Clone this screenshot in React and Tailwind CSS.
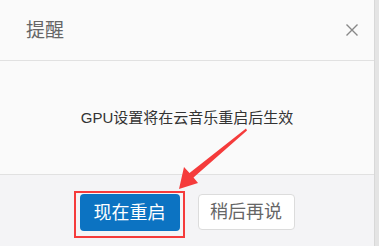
export default function App() {
  const font = { fontFamily: '"Liberation Sans", "Noto Sans CJK SC", sans-serif' };
  return (
    <div className="relative w-[379px] h-[246px] flex bg-[#e4e4e4] overflow-hidden" style={font}>
      <div className="w-[375px] h-full flex flex-col border-r border-[#d8d8d8]">
        <div className="h-[61px] shrink-0 bg-[#fafafa] border-b border-[#e1e1e1] flex items-center justify-between pl-[26px] pr-[16px]">
          <span className="text-[19px] text-[#666] leading-none">提醒</span>
          <svg width="12" height="12" viewBox="0 0 12 12" className="block">
            <path d="M0.5 0.5 L11.5 11.5 M11.5 0.5 L0.5 11.5" stroke="#888" strokeWidth="1.4" fill="none" />
          </svg>
        </div>
        <div className="h-[114px] shrink-0 bg-[#fafafa] border-b border-[#e1e1e1] flex items-center justify-center">
          <span className="text-[15px] text-[#333] leading-none">GPU设置将在云音乐重启后生效</span>
        </div>
        <div className="flex-1 bg-[#f4f4f6] flex justify-center items-start gap-[18px] pt-[19px]">
          <button className="w-[100px] h-[37px] rounded-[4px] bg-[#0c73c2] text-white text-[18px] leading-none flex items-center justify-center">
            现在重启
          </button>
          <button className="w-[97px] h-[36px] rounded-[4px] bg-white border border-[#dcdcdc] text-[#666] text-[18px] leading-none flex items-center justify-center">
            稍后再说
          </button>
        </div>
      </div>
      <div className="absolute left-[74px] top-[191px] w-[111px] h-[47px] border-2 border-[#f53b3b] pointer-events-none" />
      <svg className="absolute left-0 top-0 pointer-events-none" width="379" height="246" viewBox="0 0 379 246">
        <polygon points="179,189 184,167 189.5,173 246,128.5 247,130.5 193.5,177.5 198,183" fill="#f53b3b" />
      </svg>
    </div>
  );
}
